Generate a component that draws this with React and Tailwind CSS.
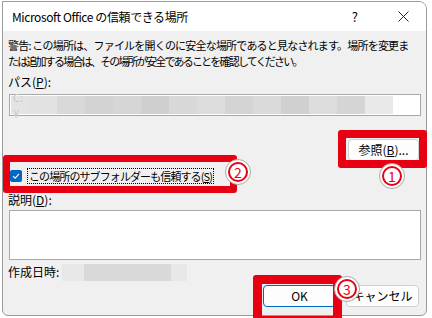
import React from "react";

const pathBlocks = [
  "bg-[#e2e2e2]", "bg-[#d9d9d9]", "bg-[#d3d3d3]", "bg-[#d6d6d6]", "bg-[#cfcfcf]",
  "bg-[#d8d8d8]", "bg-[#dcdcdc]", "bg-[#d4d4d4]", "bg-[#dadada]", "bg-[#d0d0d0]",
  "bg-[#dcdcdc]", "bg-[#d5d5d5]", "bg-[#e9e9e9]",
];

function Marker({ n, className }) {
  return (
    <div
      className={
        "absolute flex h-[26px] w-[26px] items-center justify-center rounded-full border border-[#a8a8a8] bg-white " +
        className
      }
    >
      <div className="flex h-[20px] w-[20px] items-center justify-center rounded-full border-2 border-[#e60012] text-[14px] leading-none text-[#e60012]">
        {n}
      </div>
    </div>
  );
}

function Btn({ children, primary }) {
  return (
    <div
      className={
        "flex h-[22px] w-[73px] items-center justify-center rounded-[4px] border bg-[#fdfdfd] text-[12px] leading-none " +
        (primary ? "border-[#0067c0]" : "border-[#d0d0d0]")
      }
    >
      {children}
    </div>
  );
}

export default function App() {
  return (
    <div
      className="relative h-[318px] w-[432px] overflow-hidden bg-white text-black"
      style={{ fontFamily: '"Noto Sans CJK JP", "Noto Sans", sans-serif' }}
    >
      {/* dialog window */}
      <div className="ml-[2px] mt-[1px] flex h-[315px] w-[425px] flex-col overflow-hidden rounded-tr-[8px] rounded-b-[6px] border border-[#9a9a9a] bg-[#f0f0f0]">
        <div className="flex h-[29px] shrink-0 items-center bg-white pl-[9px] text-[12px]">
          <span className="whitespace-nowrap tracking-[-0.4px]">Microsoft Office の信頼できる場所</span>
          <span className="ml-auto mr-[40px] text-[13px]">?</span>
          <svg width="11" height="11" viewBox="0 0 11 11" className="mr-[17px]">
            <path d="M0.5 0.5 L10.5 10.5 M10.5 0.5 L0.5 10.5" stroke="#222" strokeWidth="1" />
          </svg>
        </div>

        <div className="flex flex-1 flex-col pl-[5px] pr-[4px] text-[12px] leading-[16px]">
          <p className="mt-[6px] whitespace-nowrap text-[11px] leading-[16px]">
            <span className="tracking-[-0.8px]">
              警告: この場所は、ファイルを開くのに安全な場所であると見なされます。場所を変更ま
            </span>
            <br />
            <span className="tracking-[-1.8px]">
              たは追加する場合は、その場所が安全であることを確認してください。
            </span>
          </p>

          <div className="mt-[5px]">
            パス(<span className="underline">P</span>):
          </div>

          <div className="ml-[1px] mt-[4px] flex h-[22px] w-[412px] items-stretch border border-[#a8a8a8] bg-white p-[1px]">
            <div className="flex w-[18px] items-center bg-[#e4e4e4] pl-[2px] text-[11px] text-[#c8c8c8]">C:¥</div>
            {pathBlocks.map((c, i) => (
              <div key={i} className={"w-[28px] " + c} />
            ))}
          </div>

          <div className="mr-[3px] mt-[23px] flex justify-end">
            <div className="flex h-[22px] w-[71px] items-center justify-center rounded-[4px] border border-[#d0d0d0] bg-[#fdfdfd] text-[12px] leading-none">
              参照(<span className="underline">B</span>)...
            </div>
          </div>

          <div className="mt-[7px] flex h-[16px] items-center">
            <div className="ml-[2px] flex h-[12px] w-[12px] items-center justify-center rounded-[2px] bg-[#0067c0]">
              <svg width="8" height="8" viewBox="0 0 8 8">
                <path d="M1 4.2 L3.2 6.2 L7 1.8" fill="none" stroke="white" strokeWidth="1.1" />
              </svg>
            </div>
            <div className="ml-[5px] flex h-[16px] items-center whitespace-nowrap border border-dotted border-black pl-[1px] pr-[1px] text-[11px] tracking-[-0.9px]">
              この場所のサブフォルダーも信頼する(<span className="underline">S</span>)
            </div>
          </div>

          <div className="mt-[8px]">
            説明(<span className="underline">D</span>):
          </div>

          <div className="ml-[1px] mt-[2px] h-[50px] w-[412px] border border-[#a8a8a8] bg-white" />

          <div className="mt-[3px] flex h-[18px] items-center">
            <span>作成日時:</span>
            <div className="ml-[3px] flex h-[17px]">
              <div className="w-[22px] bg-[#e8e8e8]" />
              <div className="w-[87px] bg-[#d9d9d9]" />
              <div className="w-[16px] bg-[#e8e8e8]" />
            </div>
          </div>

          <div className="mr-[3px] mt-[4px] flex justify-end gap-[10px]">
            <Btn primary>OK</Btn>
            <Btn>キャンセル</Btn>
          </div>
        </div>
      </div>

      {/* annotations */}
      <div className="absolute left-[338px] top-[130px] h-[38px] w-[89px] rounded-[3px] border-[8px] border-[#e60012]" />
      <div className="absolute left-[3px] top-[155px] h-[38px] w-[234px] rounded-[3px] border-[7px] border-[#e60012]" />
      <div className="absolute left-[253px] top-[275px] h-[50px] w-[89px] rounded-[3px] border-[9px] border-[#e60012]" />

      <Marker n="1" className="left-[379px] top-[163px]" />
      <Marker n="2" className="left-[225px] top-[159px]" />
      <Marker n="3" className="left-[334px] top-[276px]" />
    </div>
  );
}
